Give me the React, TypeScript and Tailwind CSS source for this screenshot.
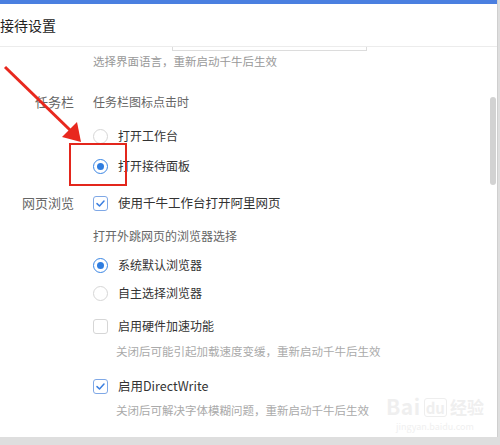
import React from 'react';

const Radio: React.FC<{ checked?: boolean }> = ({ checked }) => (
  <span
    className={`w-[15px] h-[15px] rounded-full border flex items-center justify-center bg-white ${
      checked ? 'border-[#3b86e4]' : 'border-[#d6d6d6]'
    }`}
  >
    {checked && <span className="w-[7px] h-[7px] rounded-full bg-[#2f7de0]" />}
  </span>
);

const Check: React.FC<{ checked?: boolean }> = ({ checked }) => (
  <span
    className={`w-[15px] h-[15px] rounded-[3px] border flex items-center justify-center bg-white ${
      checked ? 'border-[#7fa8e6]' : 'border-[#d6d6d6]'
    }`}
  >
    {checked && (
      <svg width="11" height="11" viewBox="0 0 11 11">
        <path d="M2 5.6 L4.5 8 L9 3" fill="none" stroke="#3b7fe0" strokeWidth="1.5" strokeLinecap="round" strokeLinejoin="round" />
      </svg>
    )}
  </span>
);

const Row: React.FC<{ label?: string; mt: string; children: React.ReactNode }> = ({ label, mt, children }) => (
  <div className={`flex items-center h-[22px] ${mt}`}>
    <div className="w-[74px] text-right text-[13px] text-[#666]">{label}</div>
    <div className="ml-[19px] flex items-center gap-[10px]">{children}</div>
  </div>
);

const App: React.FC = () => {
  return (
    <div
      className="w-[500px] h-[445px] bg-[#dedede] relative overflow-hidden"
      style={{ fontFamily: '"Noto Sans CJK SC", "Microsoft YaHei", sans-serif' }}
    >
      <div className="w-[498px] h-[437px] bg-white relative border-r border-[#cfcfcf]">
        <div className="h-[4px] bg-[#4a7fe0]" />
        <div className="h-[43px] flex items-center border-b border-[#ececec] text-[14px] text-[#222]">接待设置</div>
        <div className="ml-[172px] w-[195px] h-[4px] border border-t-0 border-[#dcdcdc]" />

        <div className="flex flex-col text-[12px] text-[#333]">
          <Row mt="mt-0">
            <span className="text-[11.5px] text-[#999]">选择界面语言，重新启动千牛后生效</span>
          </Row>
          <Row label="任务栏" mt="mt-[18px]">
            <span className="text-[#666]">任务栏图标点击时</span>
          </Row>
          <Row mt="mt-[12px]">
            <Radio />
            <span>打开工作台</span>
          </Row>
          <Row mt="mt-[8px]">
            <Radio checked />
            <span>打开接待面板</span>
          </Row>
          <Row label="网页浏览" mt="mt-[15px]">
            <Check checked />
            <span className="text-[12.5px]">使用千牛工作台打开阿里网页</span>
          </Row>
          <Row mt="mt-[11px]">
            <span className="text-[#666]">打开外跳网页的浏览器选择</span>
          </Row>
          <Row mt="mt-[7px]">
            <Radio checked />
            <span>系统默认浏览器</span>
          </Row>
          <Row mt="mt-[6px]">
            <Radio />
            <span>自主选择浏览器</span>
          </Row>
          <Row mt="mt-[11px]">
            <Check />
            <span>启用硬件加速功能</span>
          </Row>
          <Row mt="mt-[4px]">
            <span className="ml-[23px] text-[11.5px] text-[#aaa]">关闭后可能引起加载速度变缓，重新启动千牛后生效</span>
          </Row>
          <Row mt="mt-[12px]">
            <Check checked />
            <span className="text-[12.5px]">启用DirectWrite</span>
          </Row>
          <Row mt="mt-[3px]">
            <span className="ml-[23px] text-[11.5px] text-[#aaa]">关闭后可解决字体模糊问题，重新启动千牛后生效</span>
          </Row>
        </div>

        {/* scrollbar */}
        <div className="absolute right-[1px] top-[97px] w-[6px] h-[88px] rounded-[3px] bg-[#d2d2d2]" />

        {/* watermark */}
        <div className="absolute left-[386px] top-[393px] flex flex-col items-center select-none">
          <div className="flex items-end gap-[3px] text-[#efefef] h-[24px]">
            <span className="text-[21px] leading-[22px] font-bold tracking-wide">Bai</span>
            <span className="text-[15px] leading-[17px] font-bold border border-[#eeeeee] rounded-[3px] px-[1px]">du</span>
            <span className="text-[17px] leading-[20px] font-bold">经验</span>
          </div>
          <span className="text-[9px] leading-[10px] text-[#f0f0f0] mt-[5px]">jingyan.baidu.com</span>
        </div>
      </div>

      {/* annotation */}
      <div className="absolute left-[69px] top-[143px] w-[58px] h-[43px] border-2 border-[#e3261c]" />
      <svg className="absolute left-0 top-0" width="500" height="445" viewBox="0 0 500 445">
        <line x1="5" y1="67" x2="70" y2="130" stroke="#e8281e" strokeWidth="3" />
        <polygon points="81,142 62,137 77,122" fill="#e8281e" />
      </svg>
    </div>
  );
};

export default App;
